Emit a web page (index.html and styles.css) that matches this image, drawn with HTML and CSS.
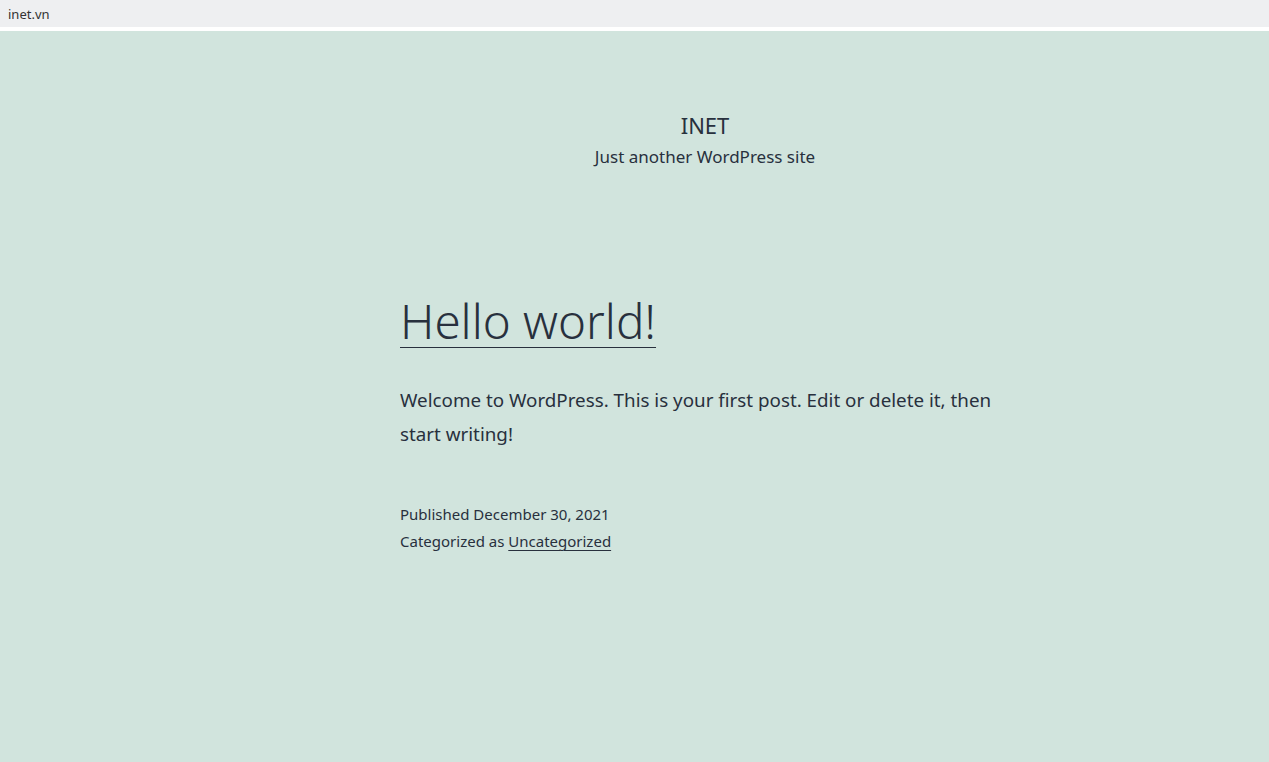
FILE: index.html
```html
<!DOCTYPE html>
<html lang="en">
<head>
<meta charset="utf-8">
<title>INET – Just another WordPress site</title>
<link rel="stylesheet" href="styles.css">
</head>
<body>
<div class="tabbar"><span class="tab-title">inet.vn</span></div>
<div class="site">
  <div class="column">
    <header class="site-header">
      <p class="site-title">INET</p>
      <p class="site-description">Just another WordPress site</p>
    </header>
    <main class="site-main">
      <article class="post">
        <h2 class="entry-title"><a href="#">Hello world!</a></h2>
        <div class="entry-content">
          <p>Welcome to WordPress. This is your first post. Edit or delete it, then start writing!</p>
        </div>
        <footer class="entry-footer">
          <span class="posted-on">Published December 30, 2021</span>
          <span class="cat-links">Categorized as <a href="#">Uncategorized</a></span>
        </footer>
      </article>
    </main>
  </div>
</div>
</body>
</html>
```
FILE: styles.css
```css
html, body {
  margin: 0;
  padding: 0;
  height: 100%;
}

body {
  font-family: "Noto Sans", "Open Sans", sans-serif;
  color: #28303d;
  background: #ffffff;
  display: flex;
  flex-direction: column;
}

.tabbar {
  height: 27px;
  background: #eeeff1;
  margin-bottom: 4px;
  display: flex;
  align-items: center;
  padding-left: 8px;
}

.tab-title {
  font-size: 13px;
  color: #333;
}

.site {
  flex: 1;
  background: #d1e4dd;
  padding-left: 141px;
}

.column {
  max-width: 610px;
  margin: 0 auto;
}

.site-header {
  text-align: center;
  padding-top: 78px;
}

.site-title {
  margin: 0;
  font-size: 22px;
  line-height: 32px;
}

.site-description {
  margin: 3px 0 0;
  font-size: 17px;
  line-height: 26px;
}

.site-main {
  padding-top: 121px;
}

.entry-title {
  margin: 0;
  font-weight: 300;
  font-size: 47.5px;
  line-height: 60px;
}

.entry-title a {
  color: #28303d;
  text-decoration: underline;
  text-decoration-thickness: 1px;
  text-underline-offset: 8px;
}

.entry-content p {
  margin: 32px 0 0;
  font-size: 18.8px;
  line-height: 34px;
}

.entry-footer {
  margin-top: 50px;
  font-size: 15px;
  line-height: 27px;
  display: flex;
  flex-direction: column;
}

.entry-footer a {
  color: #28303d;
  text-decoration: underline;
  text-decoration-thickness: 1px;
  text-underline-offset: 3px;
}
```
